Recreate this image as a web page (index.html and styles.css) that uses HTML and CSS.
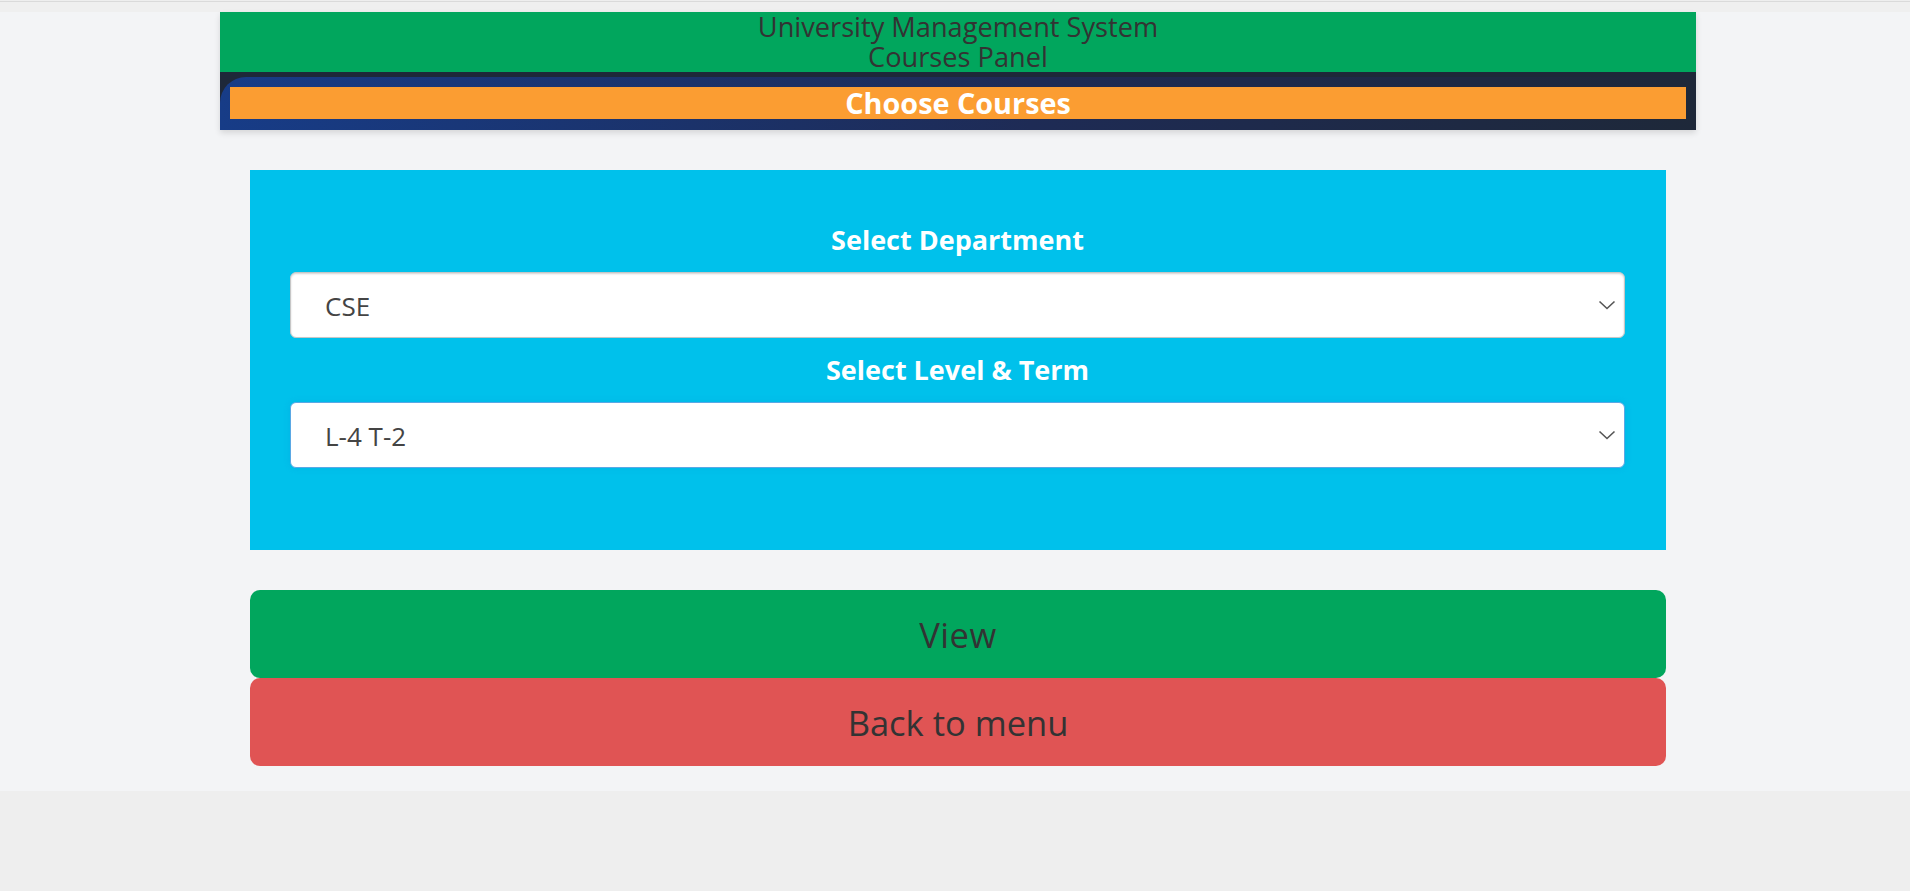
FILE: index.html
```html
<!DOCTYPE html>
<html lang="en">
<head>
<meta charset="utf-8">
<title>Choose Courses</title>
<link rel="stylesheet" href="styles.css">
</head>
<body>
<div class="topstrip"></div>
<main class="page">
  <div class="container">
    <header class="header">
      <div class="brand">
        <div class="brand-line">University Management System</div>
        <div class="brand-line">Courses Panel</div>
      </div>
      <div class="title-bar">
        <div class="title-panel">
          <h1 class="title">Choose Courses</h1>
        </div>
      </div>
    </header>

    <section class="content">
      <form class="card">
        <label class="field-label">Select Department</label>
        <div class="select">
          <span class="select-value">CSE</span>
          <svg class="chevron" width="18" height="10" viewBox="0 0 18 10"><path d="M1.5 1.5 L9 8.5 L16.5 1.5" fill="none" stroke="#555" stroke-width="1.6"/></svg>
        </div>
        <label class="field-label">Select Level &amp; Term</label>
        <div class="select select-focus">
          <span class="select-value">L-4 T-2</span>
          <svg class="chevron" width="18" height="10" viewBox="0 0 18 10"><path d="M1.5 1.5 L9 8.5 L16.5 1.5" fill="none" stroke="#555" stroke-width="1.6"/></svg>
        </div>
      </form>

      <div class="actions">
        <button class="btn btn-view" type="button">View</button>
        <button class="btn btn-back" type="button">Back to menu</button>
      </div>
    </section>
  </div>
</main>
</body>
</html>
```

FILE: styles.css
```css
html, body {
  margin: 0;
  padding: 0;
}

body {
  background: #eeeeee;
  font-family: "Open Sans", "Noto Sans", sans-serif;
  height: 891px;
  overflow: hidden;
}

.topstrip {
  height: 10px;
  margin-top: 1px;
  border-top: 1px solid #dadada;
  background: #efefef;
}

.page {
  background: #f3f4f6;
  padding-left: 6px;
  padding-bottom: 25px;
}

.container {
  width: 1476px;
  margin: 0 auto;
}

.header {
  box-shadow: 0 3px 6px rgba(0, 0, 0, 0.12);
}

.brand {
  background: #01a65d;
  height: 60px;
  text-align: center;
  color: #333333;
  font-size: 27.2px;
  line-height: 30px;
}

.title-bar {
  background: #1e2839;
  padding-top: 5px;
}

.title-panel {
  background: linear-gradient(90deg, #173c87 0%, #1e2b55 55%, #1e2839 100%);
  border-top-left-radius: 26px;
  padding: 10px 10px 11px 10px;
}

.title {
  margin: 0;
  background: #fb9d32;
  color: #ffffff;
  font-size: 28.8px;
  font-weight: 700;
  line-height: 32px;
  text-align: center;
}

.content {
  padding: 40px 30px 0 30px;
}

.card {
  background: #00c1eb;
  padding: 52px 41px 82px 40px;
  display: flex;
  flex-direction: column;
  gap: 14px;
  margin: 0;
}

.field-label {
  display: block;
  color: #ffffff;
  font-weight: 700;
  font-size: 27px;
  line-height: 36px;
  text-align: center;
}

.select {
  height: 66px;
  box-sizing: border-box;
  background: #ffffff;
  border: 1px solid #c6c6c6;
  border-radius: 6px;
  box-shadow: inset 0 1px 2px rgba(0, 0, 0, 0.18);
  display: flex;
  align-items: center;
  padding: 0 8px 0 34px;
}

.select-focus {
  border-color: #5aa8e4;
  box-shadow: 0 0 6px rgba(0, 150, 220, 0.3);
}

.select-value {
  color: #444444;
  font-size: 26px;
  line-height: 36px;
  padding-top: 2px;
}

.chevron {
  margin-left: auto;
  display: block;
}

.actions {
  padding-top: 40px;
  display: flex;
  flex-direction: column;
}

.btn {
  height: 88px;
  border: none;
  border-radius: 10px;
  font-family: "Open Sans", "Noto Sans", sans-serif;
  font-size: 34.5px;
  color: #333333;
  cursor: pointer;
  display: flex;
  align-items: center;
  justify-content: center;
  padding: 0;
}

.btn-view {
  background: #01a65d;
  letter-spacing: 0.5px;
}

.btn-back {
  background: #e05454;
}
```
